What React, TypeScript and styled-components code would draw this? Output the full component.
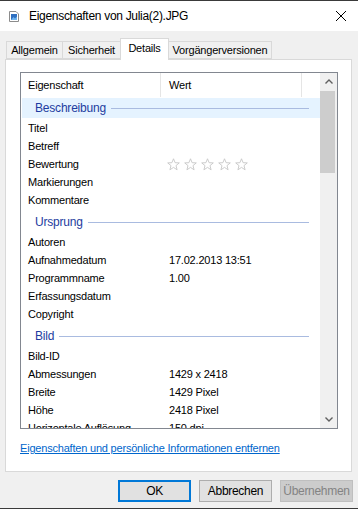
import React from "react"
import styled, { createGlobalStyle } from "styled-components"

const GlobalStyle = createGlobalStyle`
  html, body { margin: 0; padding: 0; background: #f0f0f0; }
  body { font-family: "Liberation Sans", Arial, sans-serif; }
  * { box-sizing: border-box; }
`

interface Row {
    name: string
    value?: string
    stars?: boolean
}

interface Group {
    title: string
    rows: Row[]
}

const groups: Group[] = [
    {
        title: "Beschreibung",
        rows: [
            { name: "Titel" },
            { name: "Betreff" },
            { name: "Bewertung", stars: true },
            { name: "Markierungen" },
            { name: "Kommentare" },
        ],
    },
    {
        title: "Ursprung",
        rows: [
            { name: "Autoren" },
            { name: "Aufnahmedatum", value: "17.02.2013 13:51" },
            { name: "Programmname", value: "1.00" },
            { name: "Erfassungsdatum" },
            { name: "Copyright" },
        ],
    },
    {
        title: "Bild",
        rows: [
            { name: "Bild-ID" },
            { name: "Abmessungen", value: "1429 x 2418" },
            { name: "Breite", value: "1429 Pixel" },
            { name: "Höhe", value: "2418 Pixel" },
            { name: "Horizontale Auflösung", value: "150 dpi" },
        ],
    },
]

const Window = styled.div`
    width: 358px;
    height: 509px;
    border-top: 1px solid #3a3a3a;
    border-bottom: 1px solid #3a3a3a;
    background: #f0f0f0;
    display: flex;
    flex-direction: column;
    overflow: hidden;
`

const TitleBar = styled.div`
    height: 30px;
    background: #fff;
    display: flex;
    align-items: center;
    padding-left: 9px;
    flex-shrink: 0;
`

const Title = styled.span`
    margin-left: 10px;
    font-size: 12px;
    letter-spacing: -0.3px;
    color: #000;
    flex: 1;
`

const CloseButton = styled.div`
    width: 46px;
    height: 30px;
    display: flex;
    align-items: center;
    justify-content: center;
    margin-right: -6px;
`

const TabStrip = styled.div`
    display: flex;
    align-items: flex-end;
    padding: 6px 0 0 7px;
    height: 28px;
    flex-shrink: 0;
    position: relative;
    z-index: 1;
`

const Tab = styled.div<{ $active?: boolean; $w: number }>`
    width: ${p => p.$w}px;
    height: ${p => (p.$active ? 22 : 18)}px;
    margin-bottom: ${p => (p.$active ? -1 : 0)}px;
    background: ${p => (p.$active ? "#fff" : "#f0f0f0")};
    border: 1px solid #d9d9d9;
    border-bottom: ${p => (p.$active ? "none" : "1px solid #d9d9d9")};
    margin-left: -1px;
    font-size: 11px;
    letter-spacing: -0.2px;
    color: #000;
    display: flex;
    align-items: center;
    justify-content: center;
    padding-bottom: ${p => (p.$active ? 3 : 0)}px;
`

const Panel = styled.div`
    margin: 0 6px 0 5px;
    height: 413px;
    background: #fff;
    border: 1px solid #d9d9d9;
    padding: 12px 13px 0 14px;
    flex-shrink: 0;
`

const ListView = styled.div`
    width: 318px;
    height: 357px;
    border: 1px solid #828790;
    display: flex;
    overflow: hidden;
`

const ListContent = styled.div`
    flex: 1;
    overflow: hidden;
    font-size: 11px;
    letter-spacing: -0.2px;
    color: #000;
`

const Header = styled.div`
    display: flex;
    height: 25px;
`

const HeaderCell = styled.div<{ $w: number; $pad: number }>`
    width: ${p => p.$w}px;
    padding-left: ${p => p.$pad}px;
    display: flex;
    align-items: center;
    border-right: 1px solid #e5e5e5;
    margin: 0 0 1px 0;
`

const GroupHeader = styled.div<{ $first?: boolean; $hot?: boolean }>`
    height: 20px;
    margin: ${p => (p.$first ? 0 : 3)}px 0 1px 1px;
    background: ${p => (p.$hot ? "#e5f3ff" : "transparent")};
    display: flex;
    align-items: center;
    padding: 0 11px 0 13px;
    color: #1e3ca0;
    font-size: 12px;
    letter-spacing: -0.2px;
`

const GroupLine = styled.div`
    flex: 1;
    height: 1px;
    background: #a9bbe0;
    margin-left: 5px;
`

const PropRow = styled.div`
    display: flex;
    height: 18px;
    align-items: center;
`

const NameCell = styled.div`
    width: 140px;
    padding-left: 7px;
    white-space: nowrap;
    overflow: hidden;
`

const ValueCell = styled.div`
    padding-left: 8px;
    white-space: nowrap;
    display: flex;
    align-items: center;
`

const Stars = styled.div`
    display: flex;
    gap: 4px;
    margin-left: -2px;
`

const ScrollBar = styled.div`
    width: 17px;
    background: #f0f0f0;
    display: flex;
    flex-direction: column;
    flex-shrink: 0;
`

const ArrowButton = styled.div`
    height: 17px;
    display: flex;
    align-items: center;
    justify-content: center;
`

const Thumb = styled.div`
    height: 82px;
    margin: 1px 2px 0 0;
    background: #cdcdcd;
`

const Track = styled.div`
    flex: 1;
`

const Link = styled.a`
    display: block;
    margin-top: 12px;
    font-size: 11px;
    letter-spacing: -0.2px;
    color: #0066cc;
    text-decoration: underline;
    line-height: 14px;
    white-space: nowrap;
`

const ButtonRow = styled.div`
    display: flex;
    justify-content: flex-end;
    gap: 8px;
    padding: 8px 5px 0 0;
`

const Button = styled.div<{ $primary?: boolean; $disabled?: boolean }>`
    width: 73px;
    height: 22px;
    display: flex;
    align-items: center;
    justify-content: center;
    font-size: 12px;
    letter-spacing: -0.3px;
    background: ${p => (p.$disabled ? "#cccccc" : "#e1e1e1")};
    color: ${p => (p.$disabled ? "#838383" : "#000")};
    border: ${p => (p.$primary ? "2px solid #0078d7" : p.$disabled ? "1px solid #bfbfbf" : "1px solid #adadad")};
`

function FileIcon() {
    return (
        <svg width="10" height="11" viewBox="0 0 10 11">
            <path d="M0.5 0.5 H7 L9.5 3 V10.5 H0.5 Z" fill="#fff" stroke="#8c8c8c" />
            <rect x="2" y="3" width="6" height="6" fill="#2f6fc0" />
            <path d="M2 9 L4.5 6 L6 7.5 L8 5.5 V9 Z" fill="#6fb4ee" />
        </svg>
    )
}

function Star() {
    return (
        <svg width="13" height="13" viewBox="0 0 13 13">
            <path
                d="M6.5 0.8 L8.1 4.7 L12.3 4.9 L9 7.6 L10.1 11.8 L6.5 9.4 L2.9 11.8 L4 7.6 L0.7 4.9 L4.9 4.7 Z"
                fill="#fff"
                stroke="#c6c6c6"
                strokeWidth="0.9"
                strokeLinejoin="round"
            />
        </svg>
    )
}

function Chevron({ down }: { down?: boolean }) {
    return (
        <svg width="8" height="5" viewBox="0 0 8 5">
            <path d={down ? "M0.5 0.5 L4 4 L7.5 0.5" : "M0.5 4.5 L4 1 L7.5 4.5"} fill="none" stroke="#606060" strokeWidth="1.4" />
        </svg>
    )
}

function App() {
    return (
        <>
            <GlobalStyle />
            <Window>
                <TitleBar>
                    <FileIcon />
                    <Title>Eigenschaften von Julia(2).JPG</Title>
                    <CloseButton>
                        <svg width="10" height="10" viewBox="0 0 10 10">
                            <path d="M0 0 L10 10 M10 0 L0 10" stroke="#000" strokeWidth="1" />
                        </svg>
                    </CloseButton>
                </TitleBar>
                <TabStrip>
                    <Tab $w={57}>Allgemein</Tab>
                    <Tab $w={59}>Sicherheit</Tab>
                    <Tab $w={49} $active>Details</Tab>
                    <Tab $w={104}>Vorgängerversionen</Tab>
                </TabStrip>
                <Panel>
                    <ListView>
                        <ListContent>
                            <Header>
                                <HeaderCell $w={140} $pad={7}>Eigenschaft</HeaderCell>
                                <HeaderCell $w={141} $pad={8}>Wert</HeaderCell>
                            </Header>
                            {groups.map((g, gi) => (
                                <div key={g.title}>
                                    <GroupHeader $first={gi === 0} $hot={gi === 0}>
                                        {g.title}
                                        <GroupLine />
                                    </GroupHeader>
                                    {g.rows.map(r => (
                                        <PropRow key={r.name}>
                                            <NameCell>{r.name}</NameCell>
                                            <ValueCell>
                                                {r.stars ? (
                                                    <Stars>
                                                        {[0, 1, 2, 3, 4].map(i => <Star key={i} />)}
                                                    </Stars>
                                                ) : r.value}
                                            </ValueCell>
                                        </PropRow>
                                    ))}
                                </div>
                            ))}
                        </ListContent>
                        <ScrollBar>
                            <ArrowButton><Chevron /></ArrowButton>
                            <Thumb />
                            <Track />
                            <ArrowButton><Chevron down /></ArrowButton>
                        </ScrollBar>
                    </ListView>
                    <Link>Eigenschaften und persönliche Informationen entfernen</Link>
                </Panel>
                <ButtonRow>
                    <Button $primary>OK</Button>
                    <Button>Abbrechen</Button>
                    <Button $disabled>Übernehmen</Button>
                </ButtonRow>
            </Window>
        </>
    )
}

export default App
